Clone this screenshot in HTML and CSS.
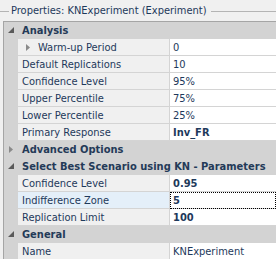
FILE: index.html
```html
<!DOCTYPE html>
<html>
<head>
<meta charset="utf-8">
<link rel="stylesheet" href="styles.css">
</head>
<body>
<div class="panel">
  <div class="title">
    <span class="rule short"></span>
    <span class="title-text">Properties: KNExperiment (Experiment)</span>
    <span class="rule grow"></span>
  </div>
  <div class="grid">
    <div class="cat">
      <span class="gutter"><svg class="tri" width="6" height="6" viewBox="0 0 6 6"><path d="M6 0 V6 H0 Z" fill="#5a5a5a"/></svg></span>
      <span class="cat-text">Analysis</span>
    </div>
    <div class="row">
      <span class="gutter"></span>
      <span class="name sub"><svg class="tri-r" width="4" height="7" viewBox="0 0 4 7"><path d="M0 0 L4 3.5 L0 7 Z" fill="#8a8a8a"/></svg>Warm-up Period</span>
      <span class="val">0</span>
    </div>
    <div class="row">
      <span class="gutter"></span>
      <span class="name">Default Replications</span>
      <span class="val">10</span>
    </div>
    <div class="row">
      <span class="gutter"></span>
      <span class="name">Confidence Level</span>
      <span class="val">95%</span>
    </div>
    <div class="row">
      <span class="gutter"></span>
      <span class="name">Upper Percentile</span>
      <span class="val">75%</span>
    </div>
    <div class="row">
      <span class="gutter"></span>
      <span class="name">Lower Percentile</span>
      <span class="val">25%</span>
    </div>
    <div class="row">
      <span class="gutter"></span>
      <span class="name">Primary Response</span>
      <span class="val bold">Inv_FR</span>
    </div>
    <div class="cat">
      <span class="gutter"><svg class="tri-c" width="4" height="7" viewBox="0 0 4 7"><path d="M0 0 L4 3.5 L0 7 Z" fill="#8a8a8a"/></svg></span>
      <span class="cat-text">Advanced Options</span>
    </div>
    <div class="cat">
      <span class="gutter"><svg class="tri" width="6" height="6" viewBox="0 0 6 6"><path d="M6 0 V6 H0 Z" fill="#5a5a5a"/></svg></span>
      <span class="cat-text">Select Best Scenario using KN - Parameters</span>
    </div>
    <div class="row">
      <span class="gutter"></span>
      <span class="name">Confidence Level</span>
      <span class="val bold">0.95</span>
    </div>
    <div class="row selected">
      <span class="gutter"></span>
      <span class="name">Indifference Zone</span>
      <span class="val bold focus">5</span>
    </div>
    <div class="row">
      <span class="gutter"></span>
      <span class="name">Replication Limit</span>
      <span class="val bold">100</span>
    </div>
    <div class="cat">
      <span class="gutter"><svg class="tri" width="6" height="6" viewBox="0 0 6 6"><path d="M6 0 V6 H0 Z" fill="#5a5a5a"/></svg></span>
      <span class="cat-text">General</span>
    </div>
    <div class="row">
      <span class="gutter"></span>
      <span class="name">Name</span>
      <span class="val">KNExperiment</span>
    </div>
  </div>
</div>
</body>
</html>
```
FILE: styles.css
```css
html, body {
  margin: 0;
  padding: 0;
  background: #f0f0f0;
  overflow: hidden;
}
body {
  font-family: "DejaVu Sans Condensed", "DejaVu Sans", sans-serif;
  font-size: 11px;
  color: #1e395b;
}
.panel {
  width: 276px;
}
.title {
  display: flex;
  align-items: center;
  height: 21px;
}
.rule {
  height: 1px;
  background: #b4b4b4;
  margin-top: 1px;
}
.rule.short {
  width: 9px;
  flex: none;
}
.rule.grow {
  flex: 1;
  margin-left: 4px;
}
.title-text {
  padding-left: 2px;
  white-space: nowrap;
  color: #1e395b;
}
.grid {
  margin-left: 3px;
  border-left: 1px solid #a5a5a5;
  border-top: 1px solid #a5a5a5;
}
.cat {
  display: flex;
  align-items: center;
  height: 16px;
  background: #d3d3d3;
  border-bottom: 1px solid #d3d3d3;
}
.cat-text {
  font-weight: bold;
  white-space: nowrap;
  color: #243a58;
}
.gutter {
  width: 14px;
  flex: none;
  align-self: stretch;
  background: #d3d3d3;
  display: flex;
  align-items: center;
  justify-content: center;
  margin-right: 4px;
}
.cat .gutter {
  margin-right: 4px;
}
.tri {
  margin-left: 0;
  margin-top: 0;
}
.tri-c {
  margin-left: 0;
}
.row {
  display: flex;
  height: 17px;
}
.row .gutter {
  margin-right: 0;
}
.name {
  width: 147px;
  flex: none;
  background: #f0f0f0;
  border-bottom: 1px solid #d4d4d4;
  border-right: 1px solid #d4d4d4;
  padding-left: 4px;
  display: flex;
  align-items: center;
  white-space: nowrap;
  box-sizing: border-box;
  width: 152px;
}
.name.sub {
  padding-left: 8px;
}
.tri-r {
  margin-right: 8px;
}
.selected .name {
  background: #e4eff9;
}
.val {
  flex: 1;
  background: #ffffff;
  border-bottom: 1px solid #d4d4d4;
  padding-left: 3px;
  display: flex;
  align-items: center;
  white-space: nowrap;
}
.bold {
  font-weight: bold;
}
.focus {
  outline: 1px dotted #000;
  outline-offset: -1px;
}
```
